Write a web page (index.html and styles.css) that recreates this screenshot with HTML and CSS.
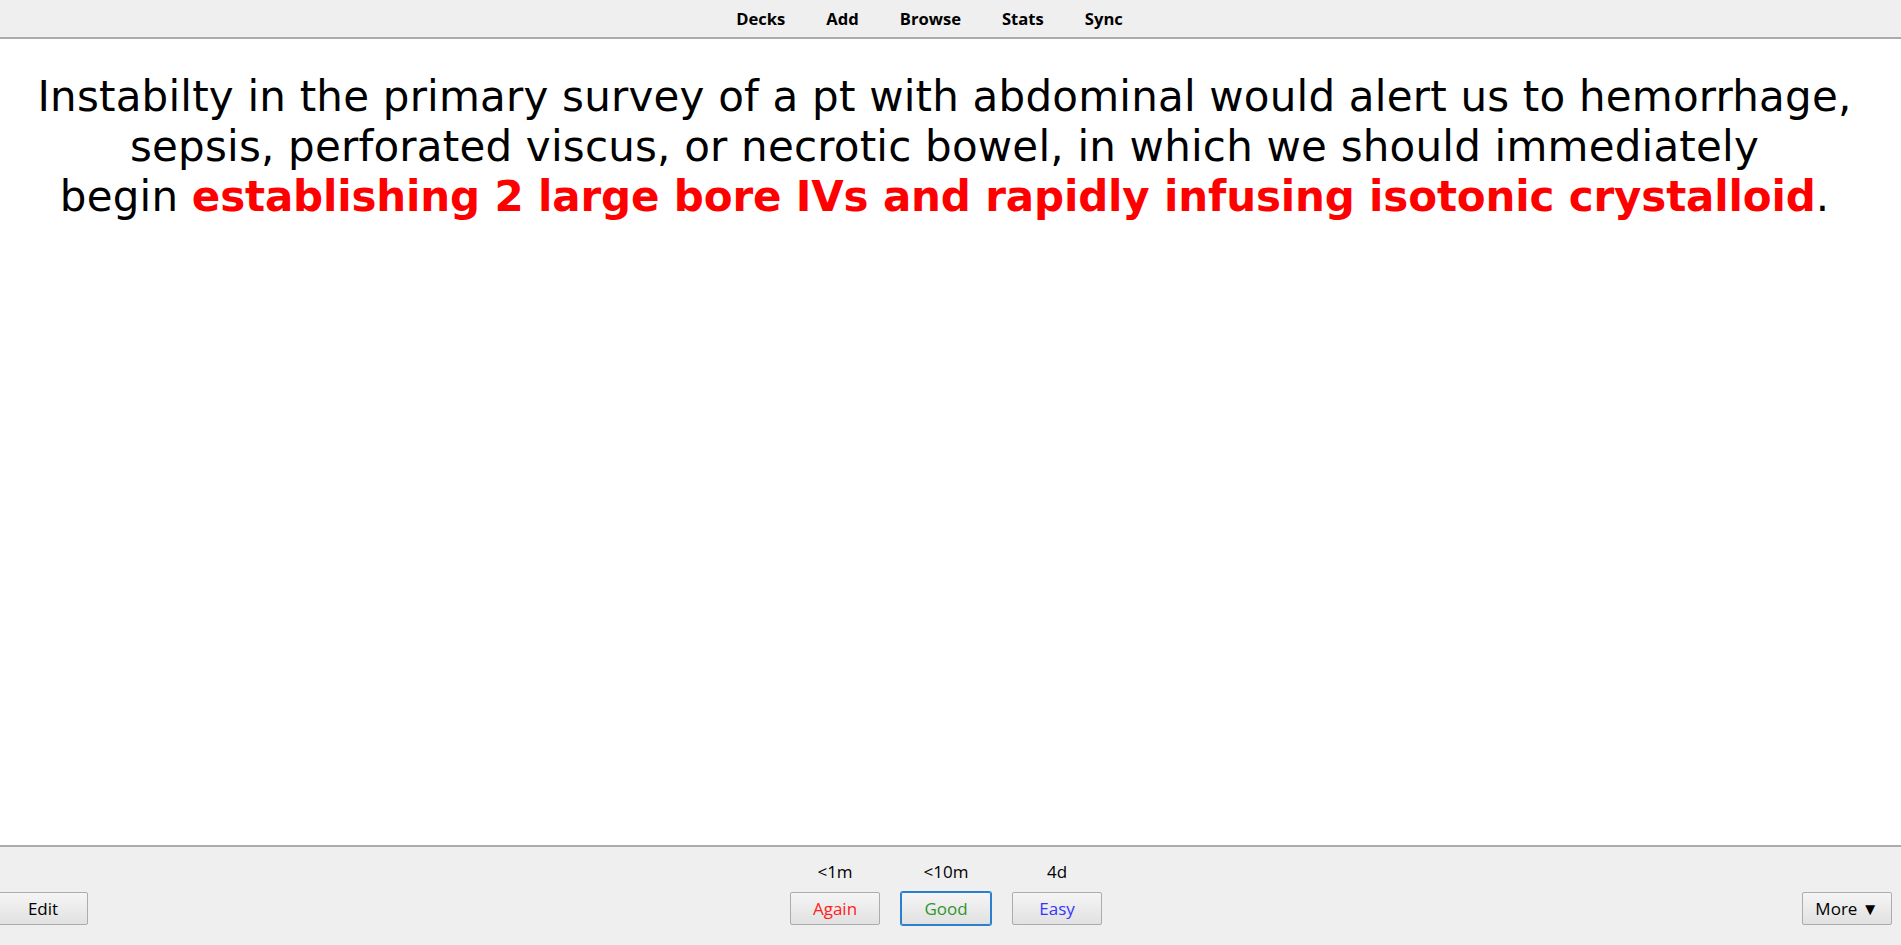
FILE: index.html
```html
<!DOCTYPE html>
<html lang="en">
<head>
<meta charset="utf-8">
<title>Anki</title>
<link rel="stylesheet" href="styles.css">
</head>
<body>
<div class="app">
  <nav class="toplinks">
    <a class="toplink" href="#">Decks</a>
    <a class="toplink" href="#">Add</a>
    <a class="toplink" href="#">Browse</a>
    <a class="toplink" href="#">Stats</a>
    <a class="toplink" href="#">Sync</a>
  </nav>
  <main class="card">
    <p class="card-text">Instabilty in the primary survey of a pt with abdominal would alert us to hemorrhage, sepsis, perforated viscus, or necrotic bowel, in which we should immediately begin&nbsp;<b class="cloze">establishing 2 large bore IVs and rapidly infusing isotonic crystalloid</b>.</p>
  </main>
  <footer class="bottombar">
    <div class="side side-left">
      <button class="btn" type="button">Edit</button>
    </div>
    <div class="answers">
      <div class="answer">
        <span class="interval">&lt;1m</span>
        <button class="btn again" type="button">Again</button>
      </div>
      <div class="answer">
        <span class="interval">&lt;10m</span>
        <button class="btn good" type="button">Good</button>
      </div>
      <div class="answer">
        <span class="interval">4d</span>
        <button class="btn easy" type="button">Easy</button>
      </div>
    </div>
    <div class="side side-right">
      <button class="btn" type="button">More &#9660;</button>
    </div>
  </footer>
</div>
</body>
</html>
```
FILE: styles.css
```css
* {
  box-sizing: border-box;
}

html, body {
  margin: 0;
  padding: 0;
  height: 100%;
  background: #ffffff;
}

body {
  font-family: "Open Sans", "Noto Sans", "Liberation Sans", sans-serif;
  color: #000;
}

.app {
  display: flex;
  flex-direction: column;
  height: 100vh;
}

.toplinks {
  flex: 0 0 auto;
  height: 39px;
  background: #efefef;
  border-bottom: 2px solid #ababab;
  display: flex;
  justify-content: center;
  align-items: center;
  gap: 41px;
  padding-right: 42px;
}

.toplink {
  font-size: 16.6px;
  font-weight: 700;
  color: #000;
  text-decoration: none;
  line-height: 20px;
  padding-top: 1px;
}

.card {
  flex: 1 1 auto;
  padding: 33px 36px 0 24px;
  overflow: hidden;
}

.card-text {
  margin: 0;
  text-align: center;
  font-family: "DejaVu Sans", Verdana, sans-serif;
  font-size: 42px;
  line-height: 50px;
  letter-spacing: 0.2px;
  color: #000;
}

.cloze {
  color: #ff0000;
  font-weight: 700;
  letter-spacing: -0.15px;
}

.bottombar {
  flex: 0 0 auto;
  height: 100px;
  background: #efefef;
  border-top: 2px solid #ababab;
  display: grid;
  grid-template-columns: 1fr auto 1fr;
  align-items: end;
  padding: 0 9px 20px 0;
}

.side {
  display: flex;
}

.side-left {
  justify-content: flex-start;
  margin-left: -2px;
}

.side-right {
  justify-content: flex-end;
}

.answers {
  display: flex;
  gap: 21px;
}

.answer {
  width: 90px;
  display: flex;
  flex-direction: column;
  align-items: center;
  gap: 10px;
}

.interval {
  font-size: 17px;
  line-height: 20px;
  color: #000;
}

.btn {
  width: 90px;
  height: 33px;
  padding: 0;
  font-family: "Open Sans", "Noto Sans", "Liberation Sans", sans-serif;
  font-size: 17px;
  color: #000;
  background: linear-gradient(#f5f5f5, #e1e1e1);
  border: 1px solid #acacac;
  border-radius: 2px;
  cursor: pointer;
}

.again {
  color: #ff2020;
}

.good {
  color: #2f962f;
  border-color: #2b7fcc;
  box-shadow: 0 0 0 1px #2b7fcc;
}

.easy {
  color: #3535ff;
}
```
